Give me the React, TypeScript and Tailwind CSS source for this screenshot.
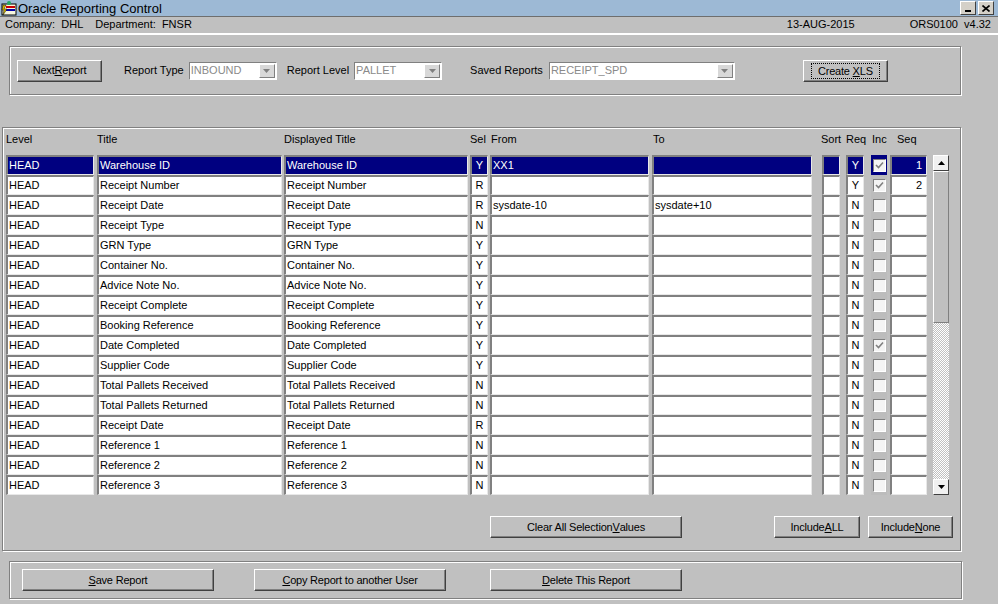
import React from "react";

const F = { fontFamily: '"Liberation Sans", Arial, sans-serif' };

const rows: [string, string, string, string, string, string, string, boolean, string][] = [
  ["HEAD", "Warehouse ID", "Warehouse ID", "Y", "XX1", "", "Y", true, "1"],
  ["HEAD", "Receipt Number", "Receipt Number", "R", "", "", "Y", true, "2"],
  ["HEAD", "Receipt Date", "Receipt Date", "R", "sysdate-10", "sysdate+10", "N", false, ""],
  ["HEAD", "Receipt Type", "Receipt Type", "N", "", "", "N", false, ""],
  ["HEAD", "GRN Type", "GRN Type", "Y", "", "", "N", false, ""],
  ["HEAD", "Container No.", "Container No.", "Y", "", "", "N", false, ""],
  ["HEAD", "Advice Note No.", "Advice Note No.", "Y", "", "", "N", false, ""],
  ["HEAD", "Receipt Complete", "Receipt Complete", "Y", "", "", "N", false, ""],
  ["HEAD", "Booking Reference", "Booking Reference", "Y", "", "", "N", false, ""],
  ["HEAD", "Date Completed", "Date Completed", "Y", "", "", "N", true, ""],
  ["HEAD", "Supplier Code", "Supplier Code", "Y", "", "", "N", false, ""],
  ["HEAD", "Total Pallets Received", "Total Pallets Received", "N", "", "", "N", false, ""],
  ["HEAD", "Total Pallets Returned", "Total Pallets Returned", "N", "", "", "N", false, ""],
  ["HEAD", "Receipt Date", "Receipt Date", "R", "", "", "N", false, ""],
  ["HEAD", "Reference 1", "Reference 1", "N", "", "", "N", false, ""],
  ["HEAD", "Reference 2", "Reference 2", "N", "", "", "N", false, ""],
  ["HEAD", "Reference 3", "Reference 3", "N", "", "", "N", false, ""],
];

function Cell({ w, sel, children, right, center }: { w: string; sel?: boolean; children?: React.ReactNode; right?: boolean; center?: boolean }) {
  return (
    <div
      className={`${w} h-[20px] shrink-0 border-t-2 border-l-2 border-t-[#808080] border-l-[#808080] border-b border-r border-b-[#e8e8e8] border-r-[#e8e8e8] px-[1px] text-[11px] leading-[16px] whitespace-nowrap overflow-hidden ${sel ? "bg-[#000080] text-white" : "bg-white text-black"} ${right ? "text-right pr-[4px]" : ""} ${center ? "text-center" : ""}`}
    >
      {children}
    </div>
  );
}

function Check({ on, sel }: { on: boolean; sel?: boolean }) {
  return (
    <div className={`w-[16px] h-[20px] shrink-0 flex items-center justify-center ${sel ? "bg-[#000080]" : "bg-[#bcbcbc]"}`}>
      <div className="w-[13px] h-[13px] bg-[#f4f4f4] border-t border-l border-t-[#808080] border-l-[#808080] border-b border-r border-b-white border-r-white flex items-center justify-center">
        {on && (
          <svg width="9" height="9" viewBox="0 0 9 9">
            <path d="M1 4 L3.5 6.5 L8 1.5" stroke="#808080" strokeWidth="1.6" fill="none" />
          </svg>
        )}
      </div>
    </div>
  );
}

function Btn({ w, children }: { w: string; children: React.ReactNode }) {
  return (
    <div className={`${w} h-[22px] shrink-0 border border-t-white border-l-white border-b-[#404040] border-r-[#404040] shadow-[inset_-1px_-1px_0_#808080] bg-[#c0c0c0] flex items-center justify-center text-[11px] text-black tracking-[-0.2px]`}>
      {children}
    </div>
  );
}

function Combo({ w, value }: { w: string; value: string }) {
  return (
    <div className={`${w} h-[18px] bg-white border-t border-l border-t-[#808080] border-l-[#808080] border-b border-r border-b-white border-r-white flex items-center`}>
      <span className="flex-1 pl-[1px] text-[11px] text-[#8a8a8a]">{value}</span>
      <div className="w-[16px] h-[14px] mr-[1px] bg-[#d8d8d8] border border-t-white border-l-white border-b-[#808080] border-r-[#808080] flex items-center justify-center">
        <svg width="7" height="4" viewBox="0 0 7 4"><path d="M0 0h7L3.5 4z" fill="#808080" /></svg>
      </div>
    </div>
  );
}

export default function App() {
  return (
    <div style={F} className="w-[998px] h-[604px] bg-[#c0c0c0] overflow-hidden text-black">
      {/* title bar */}
      <div className="h-[17px] bg-[#9db9d5] flex items-center border-b border-b-[#6e6e6e]">
        <div className="w-[16px] h-[15px] ml-[1px] relative">
          <svg width="16" height="15" viewBox="0 0 16 15">
            <rect x="1" y="3" width="14" height="11" fill="#f8f8e0" stroke="#000" />
            <rect x="5" y="5" width="9" height="2" fill="#c00" />
            <rect x="5" y="8" width="9" height="2" fill="#00a" />
            <path d="M2 4 L5 4 L3 8 L6 8 L2 14 L3 9 L1 9z" fill="#e0c000" stroke="#000" strokeWidth="0.5" />
            <circle cx="8" cy="2" r="2" fill="#2a6" />
          </svg>
        </div>
        <span className="ml-[1px] text-[13px] leading-[15px] flex-1">Oracle Reporting Control</span>
        <div className="w-[16px] h-[14px] bg-[#d4d0c8] border border-t-white border-l-white border-b-[#404040] border-r-[#404040] flex items-end justify-center pb-[2px]">
          <div className="w-[6px] h-[2px] bg-black" />
        </div>
        <div className="w-[16px] h-[14px] ml-[2px] mr-[4px] bg-[#d4d0c8] border border-t-white border-l-white border-b-[#404040] border-r-[#404040] flex items-center justify-center">
          <svg width="8" height="7" viewBox="0 0 8 7"><path d="M0.5 0.5L7.5 6.5M7.5 0.5L0.5 6.5" stroke="#000" strokeWidth="1.6" /></svg>
        </div>
      </div>
      {/* info row */}
      <div className="h-[18px] flex items-end pb-[1px] text-[11px] border-b-2 border-b-white pr-[7px]">
        <span className="ml-[5px]">Company:&nbsp; DHL</span>
        <span className="ml-[12px]">Department:&nbsp; FNSR</span>
        <span className="ml-auto">13-AUG-2015</span>
        <span className="ml-[55px]">ORS0100&nbsp; v4.32</span>
      </div>
      {/* top panel */}
      <div className="ml-[9px] mt-[11px] w-[952px] h-[49px] border border-[#808080] shadow-[inset_1px_1px_0_white,1px_1px_0_white] flex items-center text-[11px] pl-[7px]">
        <Btn w="w-[85px]">Next <u>R</u>eport</Btn>
        <span className="ml-[22px]">Report Type</span>
        <Combo w="ml-[5px] w-[88px]" value="INBOUND" />
        <span className="ml-[10px]">Report Level</span>
        <Combo w="ml-[5px] w-[88px]" value="PALLET" />
        <span className="ml-[28px]">Saved Reports</span>
        <Combo w="ml-[6px] w-[186px]" value="RECEIPT_SPD" />
        <div className="ml-[68px]">
          <Btn w="w-[85px]">
            <span className="border border-dotted border-black px-[6px] leading-[14px]">Create <u>X</u>LS</span>
          </Btn>
        </div>
      </div>
      {/* table panel */}
      <div className="ml-[2px] mt-[32px] w-[959px] h-[424px] border border-[#808080] shadow-[inset_1px_1px_0_white,1px_1px_0_white] pl-[3px] pt-[3px]">
        <div className="flex text-[11px] h-[24px] items-start">
          <div className="w-[91px]">Level</div>
          <div className="w-[187px]">Title</div>
          <div className="w-[186px]">Displayed Title</div>
          <div className="w-[21px]">Sel</div>
          <div className="w-[162px]">From</div>
          <div className="w-[168px]">To</div>
          <div className="w-[25px]">Sort</div>
          <div className="w-[26px]">Req</div>
          <div className="w-[25px]">Inc</div>
          <div className="w-[30px]">Seq</div>
        </div>
        <div className="flex">
          <div className="flex flex-col">
            {rows.map((r, i) => {
              const s = i === 0;
              return (
                <div key={i} className="flex">
                  <Cell w="w-[88px]" sel={s}>{r[0]}</Cell>
                  <Cell w="w-[185px] ml-[3px]" sel={s}>{r[1]}</Cell>
                  <Cell w="w-[184px] ml-[2px]" sel={s}>{r[2]}</Cell>
                  <Cell w="w-[18px] ml-[2px]" sel={s} center>{r[3]}</Cell>
                  <Cell w="w-[159px] ml-[2px]" sel={s}>{r[4]}</Cell>
                  <Cell w="w-[160px] ml-[3px]" sel={s}>{r[5]}</Cell>
                  <Cell w="w-[18px] ml-[10px]" sel={s}></Cell>
                  <Cell w="w-[18px] ml-[6px]" sel={s} center>{r[6]}</Cell>
                  <div className="ml-[7px]"><Check on={r[7]} sel={s} /></div>
                  <Cell w="w-[37px] ml-[3px]" sel={s} right>{r[8]}</Cell>
                </div>
              );
            })}
          </div>
          {/* scrollbar */}
          <div className="ml-[6px] w-[16px] h-[340px] flex flex-col">
            <div className="h-[16px] bg-[#f0f0f0] border border-t-white border-l-white border-b-[#404040] border-r-[#404040] flex items-center justify-center">
              <svg width="7" height="4" viewBox="0 0 7 4"><path d="M0 4h7L3.5 0z" fill="#000" /></svg>
            </div>
            <div className="h-[152px] bg-[#c0c0c0] border border-t-white border-l-white border-b-[#808080] border-r-[#808080]" />
            <div className="flex-1 bg-[repeating-conic-gradient(#c0c0c0_0%_25%,#ffffff_0%_50%)] bg-[length:2px_2px]" />
            <div className="h-[16px] bg-[#f0f0f0] border border-t-white border-l-white border-b-[#404040] border-r-[#404040] flex items-center justify-center">
              <svg width="7" height="4" viewBox="0 0 7 4"><path d="M0 0h7L3.5 4z" fill="#000" /></svg>
            </div>
          </div>
        </div>
        <div className="flex mt-[21px]">
          <Btn w="ml-[484px] w-[192px]">Clear All Selection <u>V</u>alues</Btn>
          <Btn w="ml-[92px] w-[86px]">Include <u>A</u>LL</Btn>
          <Btn w="ml-[8px] w-[85px]">Include <u>N</u>one</Btn>
        </div>
      </div>
      {/* bottom panel */}
      <div className="ml-[9px] mt-[10px] w-[953px] h-[38px] border border-[#808080] shadow-[inset_1px_1px_0_white,1px_1px_0_white] flex items-center pl-[12px]">
        <Btn w="w-[192px]"><span><u>S</u>ave Report</span></Btn>
        <Btn w="ml-[40px] w-[192px]"><span><u>C</u>opy Report to another User</span></Btn>
        <Btn w="ml-[44px] w-[192px]"><span><u>D</u>elete This Report</span></Btn>
      </div>
    </div>
  );
}
